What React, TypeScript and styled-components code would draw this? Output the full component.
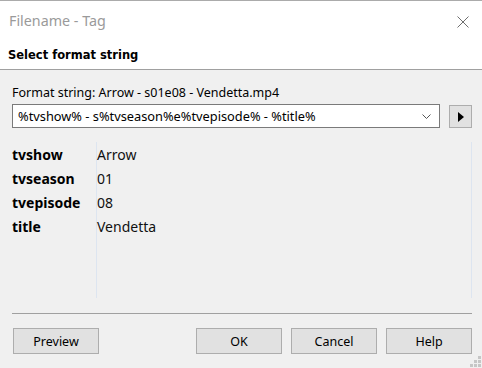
import React from 'react'
import styled, { createGlobalStyle } from 'styled-components'

const GlobalStyle = createGlobalStyle`
  html, body {
    margin: 0;
    padding: 0;
    background: #f0f0f0;
  }
  body {
    font-family: "Noto Sans", "Open Sans", sans-serif;
    color: #000;
  }
`

const tags = [
  { name: 'tvshow', value: 'Arrow' },
  { name: 'tvseason', value: '01' },
  { name: 'tvepisode', value: '08' },
  { name: 'title', value: 'Vendetta' },
]

const App: React.FC = () => {
  return (
    <Dialog>
      <GlobalStyle />
      <Header>
        <TitleBar>
          <Title>Filename - Tag</Title>
          <Close>
            <svg width="12" height="12" viewBox="0 0 12 12">
              <path d="M0.5 0.5 L11.5 11.5 M11.5 0.5 L0.5 11.5" stroke="#6e6e6e" strokeWidth="1" />
            </svg>
          </Close>
        </TitleBar>
        <Subtitle>Select format string</Subtitle>
      </Header>

      <Body>
        <FormatLabel>Format string: Arrow - s01e08 - Vendetta.mp4</FormatLabel>
        <ComboRow>
          <Combo>
            <ComboText>%tvshow% - s%tvseason%e%tvepisode% - %title%</ComboText>
            <svg width="9" height="5" viewBox="0 0 9 5">
              <path d="M0.5 0.5 L4.5 4.5 L8.5 0.5" stroke="#555" fill="none" strokeWidth="1" />
            </svg>
          </Combo>
          <PlayButton>
            <svg width="6" height="10" viewBox="0 0 6 10">
              <path d="M0 0 L6 5 L0 10 Z" fill="#000" />
            </svg>
          </PlayButton>
        </ComboRow>

        <TagList>
          <NameColumn>
            {tags.map(t => (
              <TagName key={t.name}>{t.name}</TagName>
            ))}
          </NameColumn>
          <ValueColumn>
            {tags.map(t => (
              <TagValue key={t.name}>{t.value}</TagValue>
            ))}
          </ValueColumn>
        </TagList>

        <Separator />

        <ButtonRow>
          <Button>Preview</Button>
          <Spacer />
          <Button>OK</Button>
          <Button>Cancel</Button>
          <Button>Help</Button>
        </ButtonRow>
      </Body>
      <Grip>
        <svg width="11" height="11" viewBox="0 0 11 11">
          <rect x="8" y="0" width="3" height="3" fill="#c6c6c6" />
          <rect x="4" y="4" width="3" height="3" fill="#c6c6c6" />
          <rect x="8" y="4" width="3" height="3" fill="#c6c6c6" />
          <rect x="0" y="8" width="3" height="3" fill="#c6c6c6" />
          <rect x="4" y="8" width="3" height="3" fill="#c6c6c6" />
          <rect x="8" y="8" width="3" height="3" fill="#c6c6c6" />
        </svg>
      </Grip>
    </Dialog>
  )
}

const Dialog = styled.div`
  position: relative;
  width: 482px;
  height: 368px;
  box-sizing: border-box;
  border-top: 1px solid #ababab;
  background: #f0f0f0;
  display: flex;
  flex-direction: column;
  overflow: hidden;
`

const Header = styled.div`
  height: 68px;
  background: #fff;
  border-bottom: 1px solid #a0a0a0;
  display: flex;
  flex-direction: column;
`

const TitleBar = styled.div`
  height: 40px;
  display: flex;
  align-items: center;
  justify-content: space-between;
  padding: 0 13px 0 9px;
`

const Title = styled.div`
  font-size: 14.3px;
  color: #9a9a9a;
  margin-top: -1px;
`

const Close = styled.div`
  display: flex;
  margin-top: 1px;
`

const Subtitle = styled.div`
  font-family: "DejaVu Sans", sans-serif;
  font-weight: bold;
  font-size: 11.5px;
  padding-left: 8px;
  margin-top: 7px;
`

const Body = styled.div`
  flex: 1;
  padding: 0 10px 0 12px;
  display: flex;
  flex-direction: column;
`

const FormatLabel = styled.div`
  font-size: 12.5px;
  margin-top: 15px;
  line-height: 16px;
`

const ComboRow = styled.div`
  display: flex;
  align-items: center;
  gap: 9px;
  margin-top: 3px;
`

const Combo = styled.div`
  width: 428px;
  height: 24px;
  box-sizing: border-box;
  border: 1px solid #7a7a7a;
  background: #fff;
  display: flex;
  align-items: center;
  justify-content: space-between;
  padding: 0 8px 0 5px;
`

const ComboText = styled.span`
  font-size: 12.8px;
`

const PlayButton = styled.div`
  width: 23px;
  height: 23px;
  box-sizing: border-box;
  border: 1px solid #adadad;
  background: #e1e1e1;
  display: flex;
  align-items: center;
  justify-content: center;
  margin-top: 1px;
`

const TagList = styled.div`
  margin-top: 14px;
  height: 156px;
  display: grid;
  grid-template-columns: 84px 1fr;
  border-right: 1px solid #dde5f0;
`

const NameColumn = styled.div`
  display: flex;
  flex-direction: column;
  padding-top: 1px;
`

const ValueColumn = styled.div`
  display: flex;
  flex-direction: column;
  border-left: 1px solid #dde5f0;
  padding-top: 1px;
`

const TagName = styled.div`
  height: 24px;
  line-height: 24px;
  font-size: 14px;
  font-weight: bold;
`

const TagValue = styled.div`
  height: 24px;
  line-height: 24px;
  font-size: 14px;
  color: #111;
`

const Separator = styled.div`
  margin-top: 15px;
  height: 1px;
  background: #a0a0a0;
`

const ButtonRow = styled.div`
  display: flex;
  gap: 9px;
  margin-top: 14px;
  padding-left: 1px;
`

const Spacer = styled.div`
  flex: 1;
`

const Button = styled.button`
  width: 86px;
  height: 26px;
  box-sizing: border-box;
  border: 1px solid #adadad;
  background: #e1e1e1;
  font-family: "Noto Sans", "Open Sans", sans-serif;
  font-size: 12.5px;
  color: #000;
  padding: 0;
`

const Grip = styled.div`
  position: absolute;
  right: 1px;
  bottom: 1px;
  display: flex;
`

export default App
